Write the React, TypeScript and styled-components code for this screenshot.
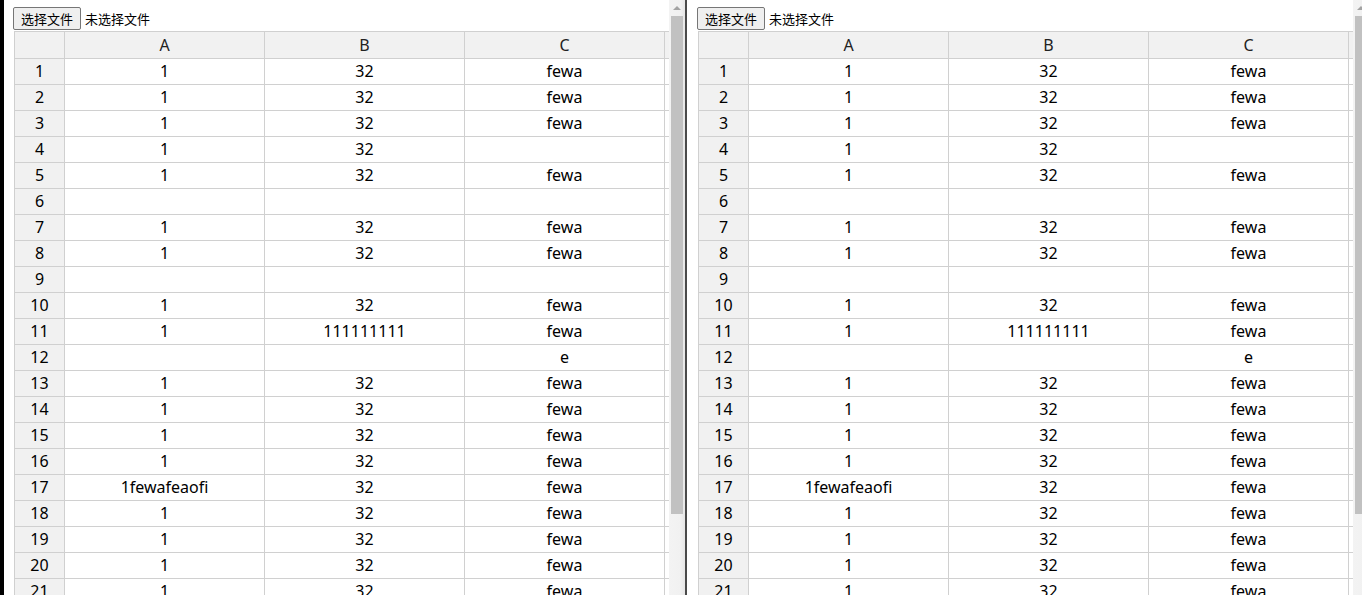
import React from "react";
import styled, { createGlobalStyle } from "styled-components";

const GlobalStyle = createGlobalStyle`
  html, body {
    margin: 0;
    padding: 0;
    overflow: hidden;
    background: #ffffff;
  }
`;

type Row = [string, string, string];

const full: Row = ["1", "32", "fewa"];
const blank: Row = ["", "", ""];

const rows: Row[] = [
  full,
  full,
  full,
  ["1", "32", ""],
  full,
  blank,
  full,
  full,
  blank,
  full,
  ["1", "111111111", "fewa"],
  ["", "", "e"],
  full,
  full,
  full,
  full,
  ["1fewafeaofi", "32", "fewa"],
  full,
  full,
  full,
  full,
  full,
  full,
];

const Screen = styled.div`
  display: flex;
  width: 1362px;
  height: 595px;
  overflow: hidden;
  background: #ffffff;
`;

const EdgeStrip = styled.div`
  flex: none;
  width: 4px;
  background: #000000;
`;

const Divider = styled.div`
  flex: none;
  width: 1px;
  border-left: 2px solid #4a4a4a;
  background: #ffffff;
`;

const Pane = styled.div`
  flex: none;
  width: 681px;
  height: 100%;
  display: flex;
`;

const PaneBody = styled.div`
  flex: 1;
  min-width: 0;
  overflow: hidden;
  padding: 7px 0 0 9px;
`;

const FileRow = styled.div`
  display: flex;
  align-items: center;
  gap: 4px;
  height: 23px;
  font-family: "Noto Sans CJK SC", "Noto Sans", sans-serif;
  font-size: 13px;
  color: #000000;
`;

const PickButton = styled.button`
  height: 23px;
  padding: 0 7px;
  margin: 0;
  border: 1px solid #767676;
  border-radius: 2px;
  background: #efefef;
  font-family: inherit;
  font-size: 13px;
  line-height: 20px;
  color: #000000;
`;

const FileLabel = styled.span`
  line-height: 20px;
`;

const Sheet = styled.table`
  margin: 1px 0 0 1px;
  border-collapse: collapse;
  table-layout: fixed;
  width: 850px;
  font-family: "Noto Sans", "Open Sans", sans-serif;
  font-size: 16px;
  color: #000000;

  th,
  td {
    border: 1px solid #d0d0d0;
    padding: 0 0 1px;
    text-align: center;
    white-space: nowrap;
    overflow: hidden;
  }
`;

const HeadCell = styled.th`
  height: 25px;
  font-weight: 400;
  background: #f1f1f1;
  color: #222222;
`;

const IndexCell = styled.td`
  height: 24px;
  background: #f1f1f1;
`;

const DataCell = styled.td`
  height: 24px;
  background: #ffffff;
`;

const Scrollbar = styled.div`
  flex: none;
  width: 16px;
  height: 100%;
  background: linear-gradient(to right, #f3f3f3 0%, #f1f1f1 70%, #e6e6e6 100%);
  display: flex;
  flex-direction: column;
  align-items: center;
`;

const ScrollArrow = styled.div`
  flex: none;
  margin-top: 6px;
  width: 0;
  height: 0;
  border-left: 4px solid transparent;
  border-right: 4px solid transparent;
  border-bottom: 4px solid #a3a3a3;
`;

const ScrollThumb = styled.div`
  flex: none;
  margin-top: 6px;
  width: 12px;
  height: 498px;
  background: #c1c1c1;
`;

const SheetPane: React.FC = () => (
  <Pane>
    <PaneBody>
      <FileRow>
        <PickButton type="button">选择文件</PickButton>
        <FileLabel>未选择文件</FileLabel>
      </FileRow>
      <Sheet>
        <colgroup>
          <col style={{ width: 50 }} />
          <col style={{ width: 200 }} />
          <col style={{ width: 200 }} />
          <col style={{ width: 200 }} />
          <col style={{ width: 200 }} />
        </colgroup>
        <thead>
          <tr>
            <HeadCell />
            <HeadCell>A</HeadCell>
            <HeadCell>B</HeadCell>
            <HeadCell>C</HeadCell>
            <HeadCell />
          </tr>
        </thead>
        <tbody>
          {rows.map((row, i) => (
            <tr key={i}>
              <IndexCell>{i + 1}</IndexCell>
              {row.map((value, j) => (
                <DataCell key={j}>{value}</DataCell>
              ))}
              <DataCell />
            </tr>
          ))}
        </tbody>
      </Sheet>
    </PaneBody>
    <Scrollbar>
      <ScrollArrow />
      <ScrollThumb />
    </Scrollbar>
  </Pane>
);

const App: React.FC = () => (
  <>
    <GlobalStyle />
    <Screen>
      <EdgeStrip />
      <SheetPane />
      <Divider />
      <SheetPane />
    </Screen>
  </>
);

export default App;
